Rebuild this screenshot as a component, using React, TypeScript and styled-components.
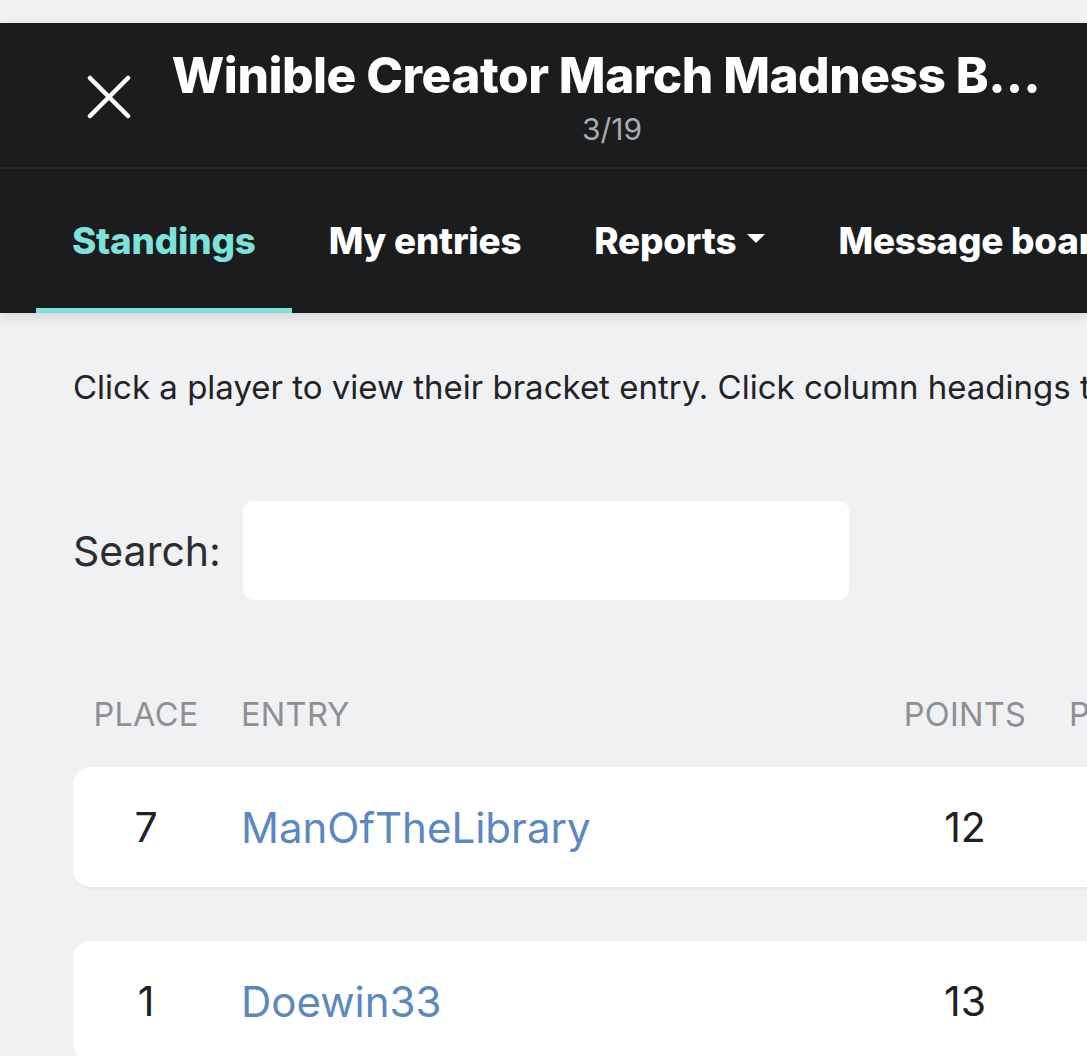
import React from "react";
import styled, { createGlobalStyle } from "styled-components";

const Global = createGlobalStyle`
  html, body { margin: 0; padding: 0; }
  body {
    background: #f0f1f3;
    font-family: Inter, "Noto Sans", sans-serif;
    overflow: hidden;
    width: 1087px;
    height: 1056px;
  }
  * { box-sizing: border-box; }
`;

const Page = styled.div`
  width: 1087px;
  height: 1056px;
  overflow: hidden;
  display: flex;
  flex-direction: column;
`;

const TopGap = styled.div`
  height: 23px;
  flex: none;
`;

const Header = styled.header`
  background: #1b1c1e;
  box-shadow: 0 4px 12px rgba(0, 0, 0, 0.12);
  flex: none;
  position: relative;
  z-index: 1;
`;

const TitleBar = styled.div`
  height: 146px;
  display: grid;
  grid-template-columns: 170px 1fr;
  align-items: center;
  border-bottom: 2px solid #26272a;
`;

const CloseButton = styled.button`
  background: none;
  border: none;
  padding: 0;
  margin-left: 84px;
  width: 50px;
  height: 50px;
  display: flex;
  align-items: center;
  justify-content: center;
  margin-top: 4px;
`;

const TitleBlock = styled.div`
  display: flex;
  flex-direction: column;
  align-items: center;
  width: 872px;
  overflow: hidden;
`;

const Title = styled.h1`
  margin: 0;
  color: #ffffff;
  font-weight: 800;
  font-size: 49.6px;
  line-height: 60px;
  white-space: nowrap;
  letter-spacing: -0.5px;
`;

const Counter = styled.div`
  color: #a9abae;
  font-size: 30px;
  line-height: 34px;
  margin-top: 7px;
  padding-left: 12px;
`;

const Nav = styled.nav`
  height: 144px;
  display: flex;
  align-items: stretch;
  white-space: nowrap;
  padding-left: 36px;
`;

const Tab = styled.div<{ $active?: boolean }>`
  position: relative;
  display: flex;
  align-items: center;
  gap: 11px;
  padding: 0 36px 2px;
  margin-right: 1px;
  font-size: 36.8px;
  font-weight: 800;
  color: ${(p) => (p.$active ? "#7ee2db" : "#ffffff")};
  letter-spacing: -0.2px;
  &::after {
    content: "";
    position: absolute;
    left: 0;
    right: 0;
    bottom: 0;
    height: 5px;
    background: ${(p) => (p.$active ? "#7ee2db" : "transparent")};
  }
`;

const Caret = styled.span`
  width: 0;
  height: 0;
  border-left: 9px solid transparent;
  border-right: 9px solid transparent;
  border-top: 9px solid #ffffff;
  margin-top: -4px;
`;

const Content = styled.main`
  padding: 50px 0 0 73px;
  display: flex;
  flex-direction: column;
`;

const Intro = styled.p`
  margin: 0;
  font-size: 33px;
  line-height: 48px;
  color: #212327;
  white-space: nowrap;
`;

const SearchRow = styled.label`
  display: flex;
  align-items: center;
  gap: 22px;
  margin-top: 90px;
  font-size: 41px;
  color: #2b2d31;
`;

const SearchInput = styled.input`
  width: 606px;
  height: 99px;
  border: none;
  border-radius: 10px;
  background: #ffffff;
  outline: none;
`;

const Table = styled.div`
  margin-top: 89px;
  display: flex;
  flex-direction: column;
  width: 1100px;
`;

const cols = "146px 664px 164px 1fr";

const HeadRow = styled.div`
  display: grid;
  grid-template-columns: ${cols};
  font-size: 32.5px;
  color: #8e9094;
  letter-spacing: 0.3px;
  height: 50px;
  align-items: center;
`;

const HeadCell = styled.div<{ $center?: boolean }>`
  padding: 0 0 0 22px;
  ${(p) => (p.$center ? "text-align: center; padding: 0;" : "")}
`;

const Card = styled.div`
  display: grid;
  grid-template-columns: ${cols};
  align-items: center;
  height: 122px;
  background: #ffffff;
  border-radius: 18px 0 0 18px;
  margin-top: 28px;
  border-bottom: 2px solid #e9eaec;
  & + & {
    margin-top: 52px;
  }
`;

const Place = styled.div`
  text-align: center;
  font-size: 41px;
  color: #1f2124;
`;

const EntryLink = styled.a`
  padding-left: 22px;
  font-size: 42px;
  color: #5a88bf;
  text-decoration: none;
`;

const Points = styled.div`
  text-align: center;
  font-size: 41px;
  color: #1f2124;
`;

const rows = [
  { place: 7, name: "ManOfTheLibrary", points: 12 },
  { place: 1, name: "Doewin33", points: 13 },
];

export default function App() {
  return (
    <Page>
      <Global />
      <TopGap />
      <Header>
        <TitleBar>
          <CloseButton aria-label="Close">
            <svg width="44" height="44" viewBox="0 0 44 44">
              <path d="M3 3 L41 41 M41 3 L3 41" stroke="#fff" strokeWidth="4.5" strokeLinecap="round" />
            </svg>
          </CloseButton>
          <TitleBlock>
            <Title>Winible Creator March Madness B…</Title>
            <Counter>3/19</Counter>
          </TitleBlock>
        </TitleBar>
        <Nav>
          <Tab $active>Standings</Tab>
          <Tab>My entries</Tab>
          <Tab>
            Reports <Caret />
          </Tab>
          <Tab>Message board</Tab>
        </Nav>
      </Header>
      <Content>
        <Intro>Click a player to view their bracket entry. Click column headings to sort.</Intro>
        <SearchRow>
          Search:
          <SearchInput type="text" />
        </SearchRow>
        <Table>
          <HeadRow>
            <HeadCell $center>PLACE</HeadCell>
            <HeadCell>ENTRY</HeadCell>
            <HeadCell $center>POINTS</HeadCell>
            <HeadCell>POSSIBLE</HeadCell>
          </HeadRow>
          {rows.map((r) => (
            <Card key={r.place}>
              <Place>{r.place}</Place>
              <EntryLink href="#">{r.name}</EntryLink>
              <Points>{r.points}</Points>
              <div />
            </Card>
          ))}
        </Table>
      </Content>
    </Page>
  );
}
